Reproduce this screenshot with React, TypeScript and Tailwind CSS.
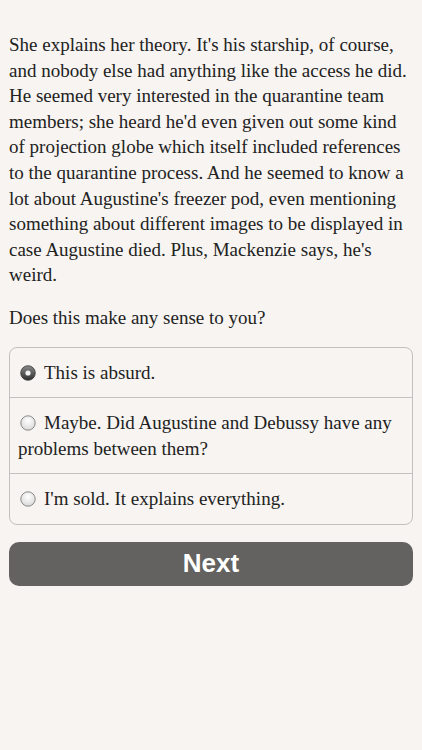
import { useState } from 'react';

const options = [
  'This is absurd.',
  'Maybe. Did Augustine and Debussy have any problems between them?',
  "I'm sold. It explains everything.",
];

export default function App() {
  const [picked, setPicked] = useState(0);

  return (
    <div className="min-h-[750px] w-full bg-[#f7f4f1] text-[#222] pt-[32px] px-[9px] font-['Liberation_Serif',serif]">
      {/* Story text */}
      <p className="text-[19px] leading-[25.6px]">
        She explains her theory. It's his starship, of course, and nobody else had anything like the
        access he did. He seemed very interested in the quarantine team members; she heard he'd even
        given out some kind of projection globe which itself included references to the quarantine
        process. And he seemed to know a lot about Augustine's freezer pod, even mentioning something
        about different images to be displayed in case Augustine died. Plus, Mackenzie says, he's weird.
      </p>

      <p className="mt-[17px] text-[19px] leading-[25px]">Does this make any sense to you?</p>

      {/* Choices */}
      <div className="mt-[17px] rounded-[8px] border border-[#c3c1bf] overflow-hidden">
        {options.map((opt, i) => (
          <button
            key={i}
            onClick={() => setPicked(i)}
            className={`block w-full text-left px-[8px] py-[12px] text-[19px] leading-[25.5px] ${
              i > 0 ? 'border-t border-[#c3c1bf]' : ''
            }`}
          >
            <Radio on={picked === i} />
            {opt}
          </button>
        ))}
      </div>

      <button className="mt-[17px] w-full h-[44px] rounded-[10px] bg-[#646260] text-white text-[26px] font-bold font-['Liberation_Sans',sans-serif]">
        Next
      </button>
    </div>
  );
}

function Radio({ on }: { on: boolean }) {
  return (
    <span className="inline-block align-[-2px] mr-[8px] ml-[2px]">
      <svg width="16" height="16" viewBox="0 0 16 16">
        <defs>
          <radialGradient id="rOff" cx="50%" cy="35%" r="65%">
            <stop offset="0%" stopColor="#ffffff" />
            <stop offset="100%" stopColor="#d9d9d9" />
          </radialGradient>
          <linearGradient id="rOn" x1="0" y1="0" x2="0" y2="1">
            <stop offset="0%" stopColor="#8a8a8a" />
            <stop offset="100%" stopColor="#2e2e2e" />
          </linearGradient>
        </defs>
        {on ? (
          <>
            <circle cx="8" cy="8" r="7.3" fill="url(#rOn)" stroke="#3a3a3a" strokeWidth="0.8" />
            <circle cx="8" cy="8" r="2.6" fill="#f2f2f2" />
          </>
        ) : (
          <circle cx="8" cy="8" r="7.2" fill="url(#rOff)" stroke="#7e7e7e" strokeWidth="0.9" />
        )}
      </svg>
    </span>
  );
}
